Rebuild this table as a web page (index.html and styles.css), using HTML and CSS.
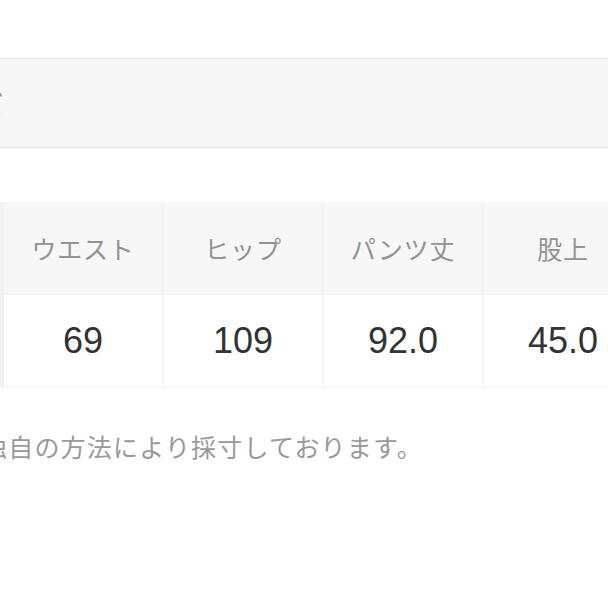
FILE: index.html
```html
<!DOCTYPE html>
<html lang="ja">
<head>
<meta charset="utf-8">
<link rel="stylesheet" href="styles.css">
</head>
<body>
<div class="page">
  <div class="band"><span class="band-title">サイズ</span></div>
  <div class="size-table">
    <div class="cell head">ウエスト</div>
    <div class="cell head">ヒップ</div>
    <div class="cell head">パンツ丈</div>
    <div class="cell head">股上</div>
    <div class="cell val">69</div>
    <div class="cell val">109</div>
    <div class="cell val">92.0</div>
    <div class="cell val">45.0</div>
  </div>
  <p class="note">独自の方法により採寸しております。</p>
</div>
</body>
</html>
```
FILE: styles.css
```css
html, body {
  margin: 0;
  padding: 0;
  background: #ffffff;
}
.page {
  width: 608px;
  height: 608px;
  overflow: hidden;
  padding-top: 58px;
  box-sizing: border-box;
  font-family: "Noto Sans CJK JP", "Liberation Sans", sans-serif;
}
.band {
  height: 88px;
  background: #f7f7f7;
  border-top: 1px solid #e6e6e6;
  border-bottom: 1px solid #e6e6e6;
  display: flex;
  align-items: center;
  overflow: hidden;
}
.band-title {
  font-size: 25px;
  color: #8a8a8a;
  margin-left: -71px;
  white-space: nowrap;
}
.size-table {
  margin-top: 54px;
  display: grid;
  grid-template-columns: repeat(4, 158px);
  grid-template-rows: 92px 92px;
  gap: 1px 2px;
  padding: 0 0 1px 4px;
  background: #f3f3f3;
  width: 700px;
}
.cell {
  display: flex;
  align-items: center;
  justify-content: center;
  white-space: nowrap;
}
.head {
  background: #f7f7f7;
  color: #939393;
  font-size: 25px;
  letter-spacing: 0.8px;
}
.val {
  background: #ffffff;
  color: #333333;
  font-family: "Liberation Sans", "Noto Sans CJK JP", sans-serif;
  font-size: 36px;
}
.note {
  margin: 40px 0 0 -18px;
  font-size: 25px;
  color: #999999;
  white-space: nowrap;
  letter-spacing: 1.2px;
}
```
